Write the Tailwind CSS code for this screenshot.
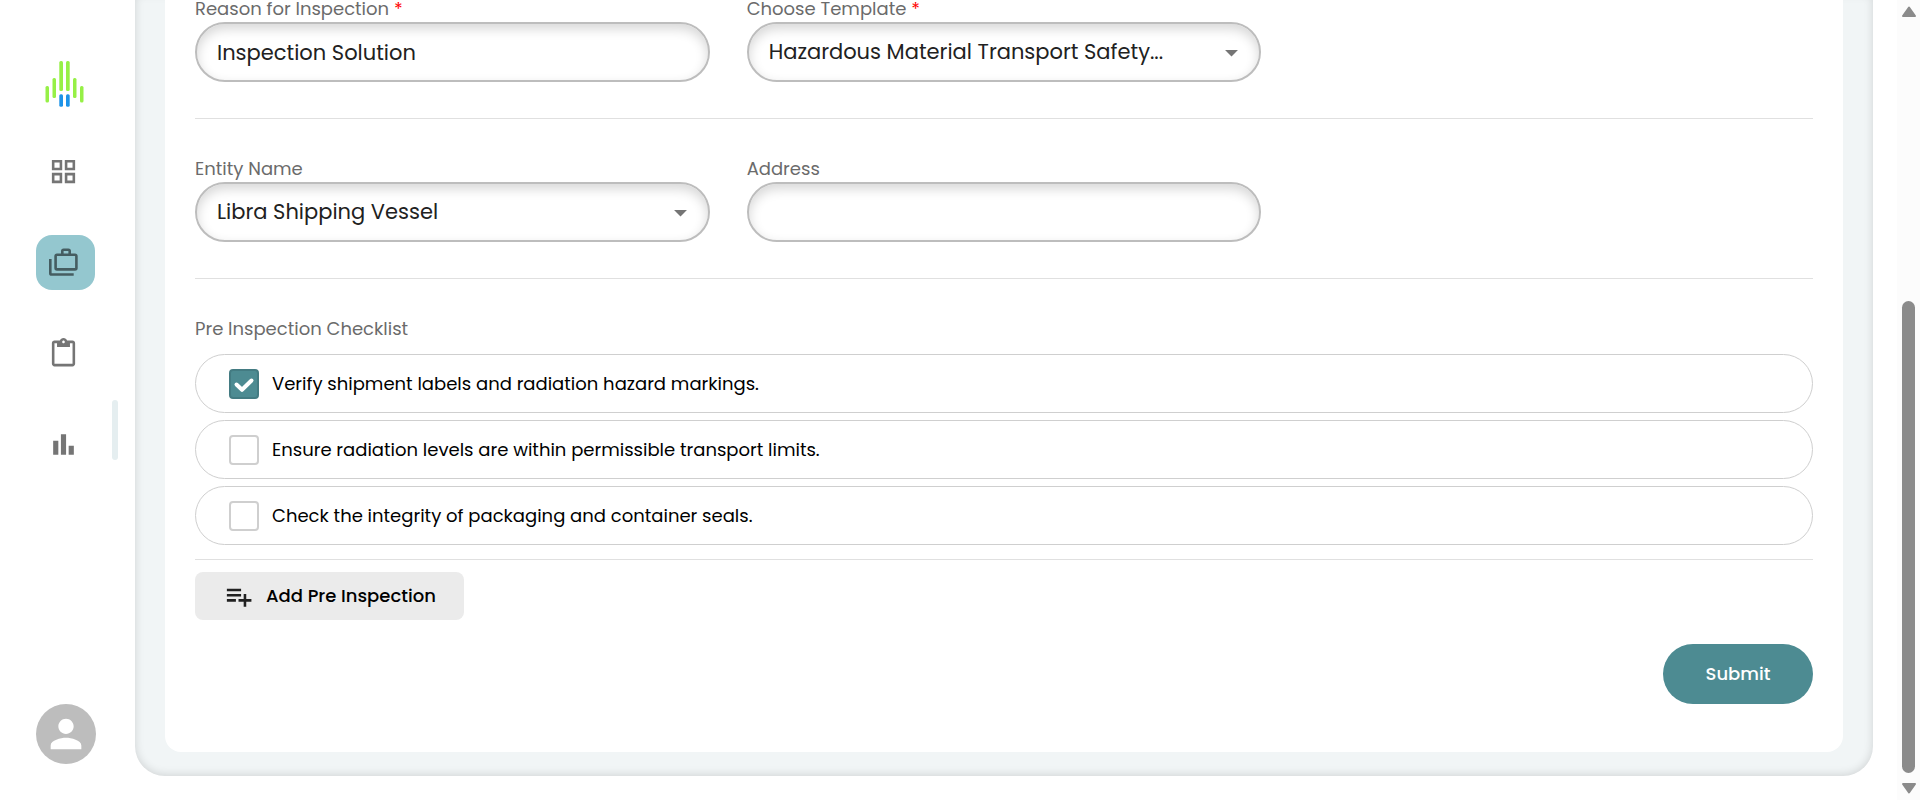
<!DOCTYPE html>
<html lang="en">
<head>
<meta charset="utf-8">
<meta name="viewport" content="width=device-width, initial-scale=1">
<title>Inspection</title>
<script src="https://cdn.jsdelivr.net/npm/@tailwindcss/browser@4"></script>
</head>
<body class="flex h-screen overflow-hidden bg-white font-[Poppins,Inter,sans-serif] text-lg text-black">

<!-- Sidebar -->
<aside class="relative flex w-[135px] shrink-0 flex-col pt-[60px] pb-9 pl-9 text-[#757575]">
  <a href="#" aria-label="Home" class="ml-2 block w-10">
    <svg class="h-12 w-10" viewBox="0 0 40 48" fill="#96f046">
      <rect x="1.5" y="26" width="3.5" height="16.5" rx="1.5"/>
      <rect x="8.5" y="18" width="3.5" height="20" rx="1.5"/>
      <rect x="15.3" y="1" width="3.7" height="30" rx="1.5"/>
      <rect x="22" y="1" width="3.7" height="30" rx="1.5"/>
      <rect x="29" y="18" width="3.5" height="20" rx="1.5"/>
      <rect x="36" y="26" width="3.5" height="16.5" rx="1.5"/>
      <rect x="15.3" y="34.3" width="3.7" height="12.4" rx="1.5" fill="#1c93e8"/>
      <rect x="22" y="34.3" width="3.7" height="12.4" rx="1.5" fill="#1c93e8"/>
    </svg>
  </a>
  <nav class="mt-9 flex w-[59px] flex-col gap-9">
    <a href="#" aria-label="Dashboard" class="flex h-[55px] items-center rounded-2xl px-3">
      <svg class="size-[31px]" viewBox="0 0 24 24" fill="currentColor"><path d="M3 3v8h8V3H3zm6 6H5V5h4v4zm-6 4v8h8v-8H3zm6 6H5v-4h4v4zm4-16v8h8V3h-8zm6 6h-4V5h4v4zm-6 4v8h8v-8h-8zm6 6h-4v-4h4v4z"/></svg>
    </a>
    <a href="#" aria-label="Inspections" aria-current="page" class="flex h-[55px] items-center rounded-2xl bg-[#94c7cf] px-3 text-[#455d61]">
      <svg class="size-[31px]" viewBox="0 0 31 31" fill="none" stroke="currentColor" stroke-width="2.6"><rect x="7.6" y="7.8" width="20.8" height="14.6" rx="1.4"/><path d="M14.3 8V4.1Q14.3 2.8 15.6 2.8h4.8q1.3 0 1.3 1.3V8M2.3 12v14.2q0 1.3 1.3 1.3H25.7"/></svg>
    </a>
    <a href="#" aria-label="Tasks" class="flex h-[55px] items-center rounded-2xl px-3">
      <svg class="size-[31px]" viewBox="0 0 24 24" fill="currentColor"><path d="M19 2h-4.180C14.400.84 13.300 0 12 0c-1.300 0-2.400.84-2.820 2H5c-1.100 0-2 .9-2 2v16c0 1.100.9 2 2 2h14c1.100 0 2-.9 2-2V4c0-1.100-.9-2-2-2zm-7 0c.55 0 1 .45 1 1s-.45 1-1 1-1-.45-1-1 .45-1 1-1zm7 18H5V4h2v3h10V4h2v16z"/></svg>
    </a>
    <a href="#" aria-label="Reports" class="flex h-[55px] items-center rounded-2xl px-3">
      <svg class="size-[31px]" viewBox="0 0 24 24" fill="currentColor"><path d="M4 9h4v11H4zm12 4h4v7h-4zm-6-9h4v16h-4z"/></svg>
    </a>
  </nav>
  <button type="button" aria-label="Account" class="mt-auto flex size-[60px] items-center justify-center rounded-full bg-[#bdbdbd] text-white">
    <svg class="size-[46px]" viewBox="0 0 24 24" fill="currentColor"><path d="M12 12c2.210 0 4-1.790 4-4s-1.790-4-4-4-4 1.790-4 4 1.790 4 4 4zm0 2c-2.670 0-8 1.340-8 4v2h16v-2c0-2.660-5.330-4-8-4z"/></svg>
  </button>
  <div class="absolute top-1/2 right-[17px] h-[60px] w-1.5 rounded-full bg-[#e5eef0]"></div>
</aside>

<!-- Content, scrolled to its end -->
<main class="flex min-w-0 flex-1 flex-col justify-end overflow-hidden pr-6 pb-6">
  <div class="rounded-b-[30px] bg-[#f1f5f6] px-[30px] pb-6 shadow-[inset_0_-1px_10px_rgba(0,0,0,0.14)]">
    <form class="rounded-b-2xl bg-white px-[30px] pb-12">
      <div class="grid grid-cols-3 gap-[37px] border-b border-[#e0e0e0] pb-9">
        <div>
          <label for="reason" class="block leading-[27px] text-[#6b6b6b]">Reason for Inspection <span class="text-[#ff0000]">*</span></label>
          <input id="reason" type="text" value="Inspection Solution" class="block h-[60px] w-full rounded-full border-2 border-[#bdbdbd] bg-white px-5 text-[21px] text-[#212121] shadow-[inset_0_5px_12px_rgba(0,0,0,0.16)]">
        </div>
        <div>
          <label for="template" class="block leading-[27px] text-[#6b6b6b]">Choose Template <span class="text-[#ff0000]">*</span></label>
          <div class="relative">
            <select id="template" class="block h-[60px] w-full appearance-none rounded-full border-2 border-[#bdbdbd] bg-white px-5 text-[21px] text-[#212121] shadow-[inset_0_5px_12px_rgba(0,0,0,0.16)]"><option>Hazardous Material Transport Safety...</option></select>
            <svg class="pointer-events-none absolute top-[15px] right-3.5 size-[31px] text-[#757575]" viewBox="0 0 24 24" fill="currentColor"><path d="M7 10l5 5 5-5z"/></svg>
          </div>
        </div>
      </div>

      <div class="grid grid-cols-3 gap-[37px] border-b border-[#e0e0e0] pt-9 pb-9">
        <div>
          <label for="entity" class="block leading-[27px] text-[#6b6b6b]">Entity Name</label>
          <div class="relative">
            <select id="entity" class="block h-[60px] w-full appearance-none rounded-full border-2 border-[#bdbdbd] bg-white px-5 text-[21px] text-[#212121] shadow-[inset_0_5px_12px_rgba(0,0,0,0.16)]"><option>Libra Shipping Vessel</option></select>
            <svg class="pointer-events-none absolute top-[15px] right-3.5 size-[31px] text-[#757575]" viewBox="0 0 24 24" fill="currentColor"><path d="M7 10l5 5 5-5z"/></svg>
          </div>
        </div>
        <div>
          <label for="address" class="block leading-[27px] text-[#6b6b6b]">Address</label>
          <input id="address" type="text" class="block h-[60px] w-full rounded-full border-2 border-[#bdbdbd] bg-white px-5 text-[21px] text-[#212121] shadow-[inset_0_5px_12px_rgba(0,0,0,0.16)]">
        </div>
      </div>

      <fieldset class="border-b border-[#e0e0e0] pt-9 pb-3.5">
        <legend class="float-left w-full leading-[27px] text-[#6b6b6b]">Pre Inspection Checklist</legend>
        <div class="clear-both flex flex-col gap-[7px] pt-3">
          <label class="flex h-[59px] items-center gap-[13px] rounded-full border border-[#cfcfcf] px-[33px]">
            <span class="relative size-[30px] shrink-0">
              <input type="checkbox" checked class="peer block size-[30px] appearance-none rounded border-2 border-[#cfcfcf] bg-white checked:border-[#437b82] checked:bg-[#4d8b92]">
              <svg class="pointer-events-none absolute inset-0 hidden size-[30px] peer-checked:block" viewBox="0 0 30 30" fill="none" stroke="#fff" stroke-width="4" stroke-linecap="round" stroke-linejoin="round"><path d="M7.500 15.500l5.500 5.300L22.500 11.500"/></svg>
            </span>
            <span>Verify shipment labels and radiation hazard markings.</span>
          </label>
          <label class="flex h-[59px] items-center gap-[13px] rounded-full border border-[#cfcfcf] px-[33px]">
            <input type="checkbox" class="size-[30px] shrink-0 appearance-none rounded border-2 border-[#cfcfcf] bg-white">
            <span>Ensure radiation levels are within permissible transport limits.</span>
          </label>
          <label class="flex h-[59px] items-center gap-[13px] rounded-full border border-[#cfcfcf] px-[33px]">
            <input type="checkbox" class="size-[30px] shrink-0 appearance-none rounded border-2 border-[#cfcfcf] bg-white">
            <span>Check the integrity of packaging and container seals.</span>
          </label>
        </div>
      </fieldset>

      <button type="button" class="mt-3 flex h-12 items-center gap-3 rounded-lg bg-[#ebebeb] px-7 font-medium">
        <svg class="size-[31px] text-[#212121]" viewBox="0 0 24 24" fill="currentColor"><path d="M14 10H3v2h11v-2zm0-4H3v2h11V6zm4 8v-4h-2v4h-4v2h4v4h2v-4h4v-2h-4zM3 16h7v-2H3v2z"/></svg>
        Add Pre Inspection
      </button>

      <div class="mt-6 flex justify-end">
        <button type="submit" class="h-[60px] w-[150px] rounded-full bg-[#4d8b92] font-medium text-white">Submit</button>
      </div>
    </form>
  </div>
</main>

<!-- Page scrollbar -->
<div aria-hidden="true" class="flex w-[23px] shrink-0 flex-col items-center bg-[#fcfcfc] pt-1.5 pb-1.5 text-[#8b8b8b]">
  <svg class="h-3 w-4" viewBox="0 0 16 12" fill="currentColor" stroke="currentColor" stroke-width="2" stroke-linejoin="round"><path d="M8 1.500L14 10H2z"/></svg>
  <div class="mt-[9px] mb-[9px] flex w-[13px] flex-1 flex-col justify-end">
    <div class="rounded-full bg-[#8b8b8b]" style="height:63.3%"></div>
  </div>
  <svg class="h-3 w-4" viewBox="0 0 16 12" fill="currentColor" stroke="currentColor" stroke-width="2" stroke-linejoin="round"><path d="M8 10.500L2 2h12z"/></svg>
</div>
</body>
</html>
